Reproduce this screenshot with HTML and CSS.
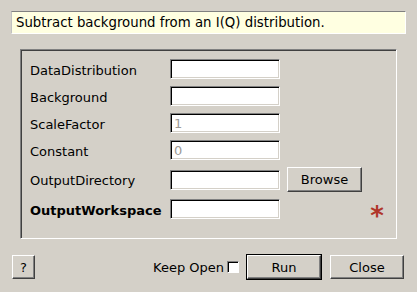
FILE: index.html
```html
<!DOCTYPE html>
<html lang="en">
<head>
    <meta charset="UTF-8">
    <title>Subtract background</title>
    <link rel="stylesheet" href="styles.css">
</head>
<body>
    <div id="dialog">
        <div class="desc">Subtract background from an I(Q) distribution.</div>

        <div class="group">
            <label class="lbl">DataDistribution</label>
            <input class="field" type="text">
            <span></span><span></span>

            <label class="lbl">Background</label>
            <input class="field" type="text">
            <span></span><span></span>

            <label class="lbl">ScaleFactor</label>
            <input class="field" type="text" placeholder="1">
            <span></span><span></span>

            <label class="lbl">Constant</label>
            <input class="field" type="text" placeholder="0">
            <span></span><span></span>

            <label class="lbl">OutputDirectory</label>
            <input class="field" type="text">
            <button class="btn browse">Browse</button>
            <span></span>

            <label class="lbl bold">OutputWorkspace</label>
            <input class="field" type="text">
            <span></span>
            <span class="req">*</span>
        </div>

        <div class="footer">
            <button class="btn help">?</button>
            <div class="spacer"></div>
            <span class="keep">Keep Open</span>
            <span class="check"></span>
            <button class="btn run">Run</button>
            <button class="btn close">Close</button>
        </div>
    </div>
</body>
</html>
```

FILE: styles.css
```css
* {
    margin: 0;
    padding: 0;
    box-sizing: border-box;
    font-family: "DejaVu Sans", sans-serif;
}
html, body {
    width: 100%;
    height: 100%;
    background-color: #d4d0c8;
}
#dialog {
    display: flex;
    flex-direction: column;
    padding-top: 11px;
    font-size: 13px;
    color: #000;
}
.desc {
    margin: 0 11px;
    height: 23px;
    padding: 0 4px;
    display: flex;
    align-items: center;
    font-size: 13.3px;
    background-color: #ffffe1;
    border-top: 1px solid #808080;
    border-left: 1px solid #c0c0c0;
    border-bottom: 1px solid #fff;
    border-right: 1px solid #fff;
}
.group {
    margin: 15px 20px 0 20px;
    height: 190px;
    padding: 9px 0 0 9px;
    display: grid;
    grid-template-columns: 133px 110px 75px 16px;
    grid-template-rows: 20px 20px 20px 20px 25px 20px;
    column-gap: 7px;
    row-gap: 7px;
    align-items: center;
    align-content: start;
    border-top: 1px solid #808080;
    border-left: 1px solid #808080;
    border-bottom: 1px solid #fff;
    border-right: 1px solid #fff;
    box-shadow: inset 1px 1px 0 #404040, inset -1px -1px 0 #d4d0c8;
}
.lbl {
    white-space: nowrap;
    padding-top: 2px;
}
.bold {
    font-weight: 700;
}
.field {
    width: 110px;
    height: 20px;
    padding: 0 3px;
    font-size: 13px;
    background-color: #fff;
    border-top: 1px solid #808080;
    border-left: 1px solid #808080;
    border-bottom: 1px solid #fff;
    border-right: 1px solid #fff;
    box-shadow: inset 1px 1px 0 #000, inset -1px -1px 0 #d4d0c8;
    outline: none;
}
.field::placeholder {
    color: #9c9a96;
}
.btn {
    height: 24px;
    font-size: 13px;
    color: #000;
    background-color: #d4d0c8;
    border-top: 1px solid #fff;
    border-left: 1px solid #fff;
    border-bottom: 1px solid #404040;
    border-right: 1px solid #404040;
    box-shadow: inset -1px -1px 0 #808080;
}
.browse {
    width: 75px;
    height: 25px;
}
.req {
    color: #b0362a;
    font-size: 26px;
    font-weight: 700;
    text-align: center;
    line-height: 20px;
    padding-top: 13px;
}
.footer {
    display: flex;
    align-items: center;
    margin-top: 16px;
    padding: 0 13px 0 12px;
}
.help {
    width: 23px;
}
.spacer {
    flex: 1;
}
.keep {
    margin-right: 3px;
}
.check {
    width: 12px;
    height: 12px;
    background-color: #fff;
    border-top: 1px solid #808080;
    border-left: 1px solid #808080;
    border-bottom: 1px solid #fff;
    border-right: 1px solid #fff;
    box-shadow: inset 1px 1px 0 #000;
}
.run {
    width: 74px;
    margin-left: 8px;
    outline: 1px solid #000;
}
.close {
    width: 74px;
    margin-left: 9px;
}
```
